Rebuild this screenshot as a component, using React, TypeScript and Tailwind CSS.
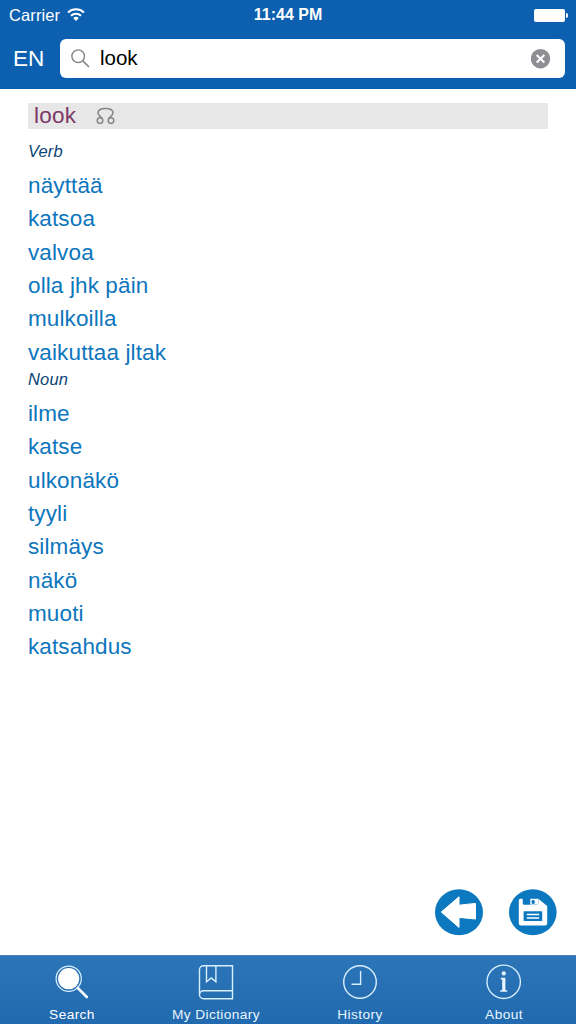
import { useState, type ReactNode } from 'react'

type Section = { kind: string; words: string[] }
type Tab = { label: string; icon: ReactNode }

const SECTIONS: Section[] = [
    { kind: 'Verb', words: ['näyttää', 'katsoa', 'valvoa', 'olla jhk päin', 'mulkoilla', 'vaikuttaa jltak'] },
    { kind: 'Noun', words: ['ilme', 'katse', 'ulkonäkö', 'tyyli', 'silmäys', 'näkö', 'muoti', 'katsahdus'] },
]

const TABS: Tab[] = [
    {
        label: 'Search',
        icon: (
            <svg width="36" height="36" viewBox="0 0 36 36" fill="none">
                <circle cx="14.7" cy="14.7" r="12.6" stroke="#d8efff" strokeWidth="1.2" />
                <circle cx="14.7" cy="14.7" r="10.6" fill="#fff" />
                <path d="M23.8 24L32.8 33" stroke="#f4faff" strokeWidth="2.6" strokeLinecap="round" />
            </svg>
        ),
    },
    {
        label: 'My Dictionary',
        icon: (
            <svg width="36" height="36" viewBox="0 0 36 36" fill="none" stroke="#d8efff" strokeWidth="1.4">
                <path d="M34.5 1.7H5.5a4 4 0 0 0-4 4v25a4 4 0 0 0 4 4h29zM34.5 26.7H5.5a4 4 0 0 0-4 4" />
                <path d="M8.5 1.7v16l4.7-3.8 4.7 3.8v-16" />
            </svg>
        ),
    },
    {
        label: 'History',
        icon: (
            <svg width="36" height="36" viewBox="0 0 36 36" fill="none" stroke="#d8efff" strokeWidth="1.4">
                <circle cx="18" cy="18" r="16.3" />
                <path d="M18.6 7v13.3H9.5" />
            </svg>
        ),
    },
    {
        label: 'About',
        icon: (
            <svg width="36" height="36" viewBox="0 0 36 36" fill="none">
                <circle cx="17.7" cy="17.8" r="16.7" stroke="#d8efff" strokeWidth="1.4" />
                <circle cx="17.8" cy="9.4" r="2.1" fill="#e8f6ff" />
                <path d="M14.8 13.8h4.6v12.4h1.8v1.5h-7v-1.5h2v-10.8h-1.4z" fill="#e8f6ff" />
            </svg>
        ),
    },
]

function StatusBar() {
    return (
        <div className="grid h-[30px] grid-cols-3 items-center text-white">
            <div className="flex items-center gap-[7px] pl-[9px]">
                <span className="text-[16.5px] tracking-[0.1px]">Carrier</span>
                <svg width="18" height="14" viewBox="0 0 18 14" fill="none" stroke="#fff" strokeWidth="2">
                    <path d="M1 4.5a11.6 11.6 0 0 1 16 0M4 7.8a7.3 7.3 0 0 1 10 0" />
                    <path d="M6.2 10a4 4 0 0 1 5.6 0L9 12.9z" fill="#fff" stroke="none" />
                </svg>
            </div>
            <span className="text-center text-[16px] font-bold">11:44 PM</span>
            <div className="flex items-center justify-end gap-px pr-[8px]">
                <div className="h-[13px] w-[31px] rounded-[2px] bg-white" />
                <div className="h-[5px] w-[2px] rounded-r-full bg-white" />
            </div>
        </div>
    )
}

export default function App() {
    const [query, setQuery] = useState('look')
    const [active, setActive] = useState('Search')

    return (
        <div className="flex h-[1024px] w-[576px] flex-col overflow-hidden bg-white font-['Liberation_Sans',Arial,sans-serif]">
            <header className="h-[89px] shrink-0 bg-[#0d60b0]">
                <StatusBar />
                <div className="flex items-center pt-[9px] pr-[11px] pl-[13px]">
                    <button className="w-[47px] text-left text-[22.5px] leading-[39px] text-white">EN</button>
                    <label className="flex h-[39px] flex-1 items-center rounded-[6px] bg-white pr-[14px] pl-[11px]">
                        <svg width="19" height="19" viewBox="0 0 19 19" fill="none" stroke="#85858a" strokeWidth="1.4">
                            <circle cx="7.2" cy="7.2" r="6.3" />
                            <path d="M11.8 11.8L18 18" strokeWidth="1.7" />
                        </svg>
                        <input
                            className="ml-[10px] min-w-0 flex-1 bg-transparent text-[20.5px] text-black outline-none"
                            value={query}
                            onChange={(e) => setQuery(e.target.value)}
                        />
                        <button onClick={() => setQuery('')}>
                            <svg className="block" width="20" height="20" viewBox="0 0 20 20">
                                <circle cx="9.5" cy="9.7" r="9.7" fill="#8e8e93" />
                                <path d="M5.7 5.9l7.6 7.6M13.3 5.9l-7.6 7.6" stroke="#fff" strokeWidth="2.1" />
                            </svg>
                        </button>
                    </label>
                </div>
            </header>

            <main className="flex flex-1 flex-col px-7 pt-[14px]">
                {/* Headword */}
                <div className="flex h-[26px] shrink-0 items-center gap-[20px] bg-[#e7e7e7] pl-[6px]">
                    <h1 className="text-[22.5px] leading-[26px] tracking-[0.2px] text-[#7c3a66]">look</h1>
                    <svg width="19" height="18" viewBox="0 0 19 18" fill="none" stroke="#858585" strokeWidth="1.5">
                        <path d="M6.3 12C6 9.6 2 9.3 2 5.8 2 2.9 5 1.4 9.5 1.4S17 2.9 17 5.8c0 3.5-4 3.8-4.3 6.2" />
                        <circle cx="4" cy="13.6" r="2.8" />
                        <circle cx="15" cy="13.6" r="2.8" />
                    </svg>
                </div>

                <div className="pt-[12.2px]">
                    {SECTIONS.map((section) => (
                        <section key={section.kind}>
                            <h2 className="mb-[7.2px] text-[16.5px] leading-[20.4px] tracking-[0.15px] text-[#0b4576] italic">{section.kind}</h2>
                            <ul>
                                {section.words.map((word) => (
                                    <li key={word} className="h-[33.4px] text-[22.5px] leading-[33.4px] tracking-[0.12px] text-[#0d76bd]">
                                        {word}
                                    </li>
                                ))}
                            </ul>
                        </section>
                    ))}
                </div>

                {/* Actions */}
                <div className="-mr-[9px] mt-auto mb-[19px] flex justify-end gap-[26px]">
                    <button>
                        <svg className="block" width="48" height="48" viewBox="0 0 48 48">
                            <ellipse cx="24" cy="24.3" rx="24" ry="23" fill="#0b78c0" />
                            <path d="M6.3 24L24 8.8v8.4l16.5-1.8v15.6L24 29.4v10z" fill="#fff" stroke="#fff" strokeLinejoin="round" />
                        </svg>
                    </button>
                    <button>
                        <svg className="block" width="48" height="48" viewBox="0 0 48 48">
                            <ellipse cx="23.8" cy="24.3" rx="23.8" ry="23" fill="#0b78c0" />
                            <path d="M11.4 10.8h2.3v4.4a1.6 1.6 0 0 0 1.6 1.6h12.4a1.6 1.6 0 0 0 1.6-1.6v-4.4l8.9 7.2v17.6a2 2 0 0 1-2 2H11.8a2 2 0 0 1-2-2V12.4a1.6 1.6 0 0 1 1.6-1.6z" fill="#fff" />
                            <path d="M21.3 10.8H29v5.8h-7.7z" fill="#fff" />
                            <rect x="22.7" y="12" width="3" height="4" rx="1.2" fill="#0b78c0" />
                            <rect x="14.6" y="23.2" width="18.6" height="9.8" rx="0.6" fill="#0b78c0" />
                            <path d="M17.8 26.4h12.4M17.8 29.9h12.4" stroke="#fff" strokeWidth="1.5" />
                        </svg>
                    </button>
                </div>
            </main>

            <nav className="grid h-[69px] shrink-0 grid-cols-4 border-t border-[#4b85b8] bg-linear-to-b from-[#2c75b7] to-[#216aaf]">
                {TABS.map((tab) => (
                    <button
                        key={tab.label}
                        onClick={() => setActive(tab.label)}
                        className={`flex flex-col items-center pt-[8px] text-[13.7px] leading-[16px] tracking-[0.4px] ${active === tab.label ? 'text-white' : 'text-[#e8f6ff]'}`}
                    >
                        {tab.icon}
                        <span className="mt-[7px]">{tab.label}</span>
                    </button>
                ))}
            </nav>
        </div>
    )
}
